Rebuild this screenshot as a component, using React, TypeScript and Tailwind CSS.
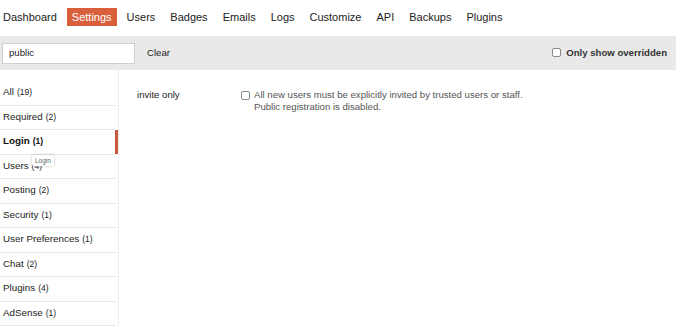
const navItems = [
  "Dashboard",
  "Settings",
  "Users",
  "Badges",
  "Emails",
  "Logs",
  "Customize",
  "API",
  "Backups",
  "Plugins",
];

const categories = [
  { name: "All", count: 19 },
  { name: "Required", count: 2 },
  { name: "Login", count: 1, active: true },
  { name: "Users", count: 4 },
  { name: "Posting", count: 2 },
  { name: "Security", count: 1 },
  { name: "User Preferences", count: 1 },
  { name: "Chat", count: 2 },
  { name: "Plugins", count: 4 },
  { name: "AdSense", count: 1 },
];

function Box() {
  return (
    <span className="inline-block w-[9px] h-[9px] shrink-0 rounded-[2px] border border-[#8a8a8a] bg-white" />
  );
}

function App() {
  return (
    <div className="w-[690px] h-[326px] overflow-hidden bg-white font-['Liberation_Sans',Arial,sans-serif] text-[#222]">
      {/* top nav */}
      <nav className="flex items-center h-[34px] -ml-[2px] gap-[5px] text-[11px]">
        {navItems.map((item) =>
          item === "Settings" ? (
            <span
              key={item}
              className="px-[5px] h-[18px] leading-[18px] bg-[#d95f3d] text-white"
            >
              {item}
            </span>
          ) : (
            <span key={item} className="px-[5px] leading-[18px]">
              {item}
            </span>
          )
        )}
      </nav>

      {/* filter bar */}
      <div className="mt-[2px] flex items-center h-[34px] w-[676px] bg-[#e9e9e9] pl-[2px] pr-[9px] text-[9.6px]">
        <div className="w-[133px] h-[21px] border border-[#cfcfcf] bg-white pl-[6px] flex items-center">
          public
        </div>
        <span className="ml-[12px]">Clear</span>
        <label className="ml-auto flex items-center gap-[5px] font-bold text-[#333]">
          <Box />
          Only show overridden
        </label>
      </div>

      {/* body */}
      <div className="flex">
        <ul className="relative w-[119px] h-[260px] pt-[11px] border-r border-[#eeeeee]">
          {categories.map((c) => (
            <li
              key={c.name}
              className={
                "relative flex items-center w-[116px] h-[24.5px] pl-[3px] border-b border-[#e9e9e9] " +
                (c.active ? "font-bold text-[#111]" : "text-[#222]")
              }
            >
              <span className="text-[9.8px]">{c.name}</span>
              <span className="ml-[3px] text-[8.5px]">({c.count})</span>
              {c.active && (
                <span className="absolute right-[-2px] top-0 h-full w-[3px] bg-[#c85a3c]" />
              )}
            </li>
          ))}
          <span className="absolute left-[32px] top-[85px] px-[3px] h-[11px] leading-[11px] bg-white text-[6.5px] text-[#666] shadow-[0_0_3px_rgba(0,0,0,0.25)] rounded-[2px]">
            Login
          </span>
        </ul>

        <div className="flex pl-[18px] pt-[19px] text-[9.6px] leading-[12px]">
          <div className="w-[104px]">invite only</div>
          <div className="flex items-start gap-[4px] text-[#555]">
            <span className="mt-[1.5px]">
              <Box />
            </span>
            <div>
              <div>All new users must be explicitly invited by trusted users or staff.</div>
              <div>Public registration is disabled.</div>
            </div>
          </div>
        </div>
      </div>
    </div>
  );
}

export default App;
